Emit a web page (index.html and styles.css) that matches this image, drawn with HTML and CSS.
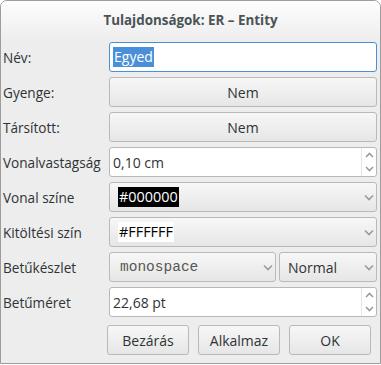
FILE: index.html
```html
<!DOCTYPE html>
<html lang="hu">
<head>
  <meta charset="UTF-8" />
  <title>Tulajdonságok: ER – Entity</title>
  <link rel="stylesheet" href="styles.css">
</head>
<body>
  <div class="window">
    <div class="titlebar">Tulajdonságok: ER – Entity</div>

    <div class="form">
      <label>Név:</label>
      <div class="entry focused"><span class="sel">Egyed</span></div>

      <label>Gyenge:</label>
      <div class="button">Nem</div>

      <label>Társított:</label>
      <div class="button">Nem</div>

      <label>Vonalvastagság</label>
      <div class="entry spin">
        <span>0,10 cm</span>
        <div class="arrows">
          <svg width="9" height="6" viewBox="0 0 9 6"><path d="M1 5 L4.5 1.5 L8 5" fill="none" stroke="#9a9c9a" stroke-width="1.6"/></svg>
          <svg width="9" height="6" viewBox="0 0 9 6"><path d="M1 1 L4.5 4.5 L8 1" fill="none" stroke="#9a9c9a" stroke-width="1.6"/></svg>
        </div>
      </div>

      <label>Vonal színe</label>
      <div class="combo">
        <span class="swatch black">#000000</span>
        <svg class="chev" width="10" height="7" viewBox="0 0 10 7"><path d="M1 1.5 L5 5.5 L9 1.5" fill="none" stroke="#9a9c9a" stroke-width="1.6"/></svg>
      </div>

      <label>Kitöltési szín</label>
      <div class="combo">
        <span class="swatch white">#FFFFFF</span>
        <svg class="chev" width="10" height="7" viewBox="0 0 10 7"><path d="M1 1.5 L5 5.5 L9 1.5" fill="none" stroke="#9a9c9a" stroke-width="1.6"/></svg>
      </div>

      <label>Betűkészlet</label>
      <div class="pair">
        <div class="combo">
          <span class="mono">monospace</span>
          <svg class="chev" width="10" height="7" viewBox="0 0 10 7"><path d="M1 1.5 L5 5.5 L9 1.5" fill="none" stroke="#9a9c9a" stroke-width="1.6"/></svg>
        </div>
        <div class="combo">
          <span>Normal</span>
          <svg class="chev" width="10" height="7" viewBox="0 0 10 7"><path d="M1 1.5 L5 5.5 L9 1.5" fill="none" stroke="#9a9c9a" stroke-width="1.6"/></svg>
        </div>
      </div>

      <label>Betűméret</label>
      <div class="entry spin">
        <span>22,68 pt</span>
        <div class="arrows">
          <svg width="9" height="6" viewBox="0 0 9 6"><path d="M1 5 L4.5 1.5 L8 5" fill="none" stroke="#9a9c9a" stroke-width="1.6"/></svg>
          <svg width="9" height="6" viewBox="0 0 9 6"><path d="M1 1 L4.5 4.5 L8 1" fill="none" stroke="#9a9c9a" stroke-width="1.6"/></svg>
        </div>
      </div>
    </div>

    <div class="actions">
      <div class="button">Bezárás</div>
      <div class="button">Alkalmaz</div>
      <div class="button">OK</div>
    </div>
  </div>
</body>
</html>
```

FILE: styles.css
```css
body {
  margin: 0;
  font-family: 'Open Sans', sans-serif;
  font-size: 14px;
  color: #2e3436;
  background: #ffffff;
}

.window {
  width: 379px;
  height: 362px;
  border: 1px solid #9d9d9d;
  border-radius: 7px 7px 0 0;
  background: #ededed;
  overflow: hidden;
}

.titlebar {
  height: 41px;
  line-height: 38px;
  text-align: center;
  font-weight: bold;
  font-size: 13.4px;
  color: #4a5356;
  background: linear-gradient(#fdfdfd, #ededed);
}

.form {
  display: grid;
  grid-template-columns: 106px 1fr;
  grid-auto-rows: 30px;
  row-gap: 5px;
  padding: 0 3px 0 2px;
}

label {
  display: flex;
  align-items: center;
  white-space: nowrap;
  font-size: 13.6px;
}

.entry {
  display: flex;
  align-items: center;
  background: #ffffff;
  border: 1px solid #b8b8b8;
  border-radius: 3px;
  padding-left: 3px;
  box-sizing: border-box;
}

.entry.focused {
  border-color: #4a90d9;
}

.sel {
  background: #4a90d9;
  color: #ffffff;
  line-height: 20px;
  padding: 0 1px;
}

.spin {
  justify-content: space-between;
}

.arrows {
  display: flex;
  flex-direction: column;
  justify-content: space-around;
  align-items: center;
  height: 100%;
  width: 14px;
  border-left: 1px solid #e6e6e6;
}

.button, .combo {
  display: flex;
  align-items: center;
  justify-content: center;
  background: linear-gradient(#f7f7f7, #e6e6e6);
  border: 1px solid #b9b9b9;
  border-radius: 3px;
  box-sizing: border-box;
}

.combo {
  justify-content: space-between;
  padding: 0 2px 0 8px;
}

.swatch {
  line-height: 20px;
  padding: 0 1px;
  font-size: 14.4px;
}

.swatch.black {
  background: #000000;
  color: #ffffff;
}

.swatch.white {
  background: #ffffff;
  color: #000000;
}

.mono {
  font-family: 'Liberation Mono', monospace;
  font-size: 14.5px;
  color: #555753;
  padding-left: 2px;
}

.pair {
  display: grid;
  grid-template-columns: 167px 1fr;
  column-gap: 3px;
}

.actions {
  display: flex;
  gap: 9px;
  padding: 8px 9px 0 106px;
}

.actions .button {
  width: 82px;
  height: 30px;
}
```
